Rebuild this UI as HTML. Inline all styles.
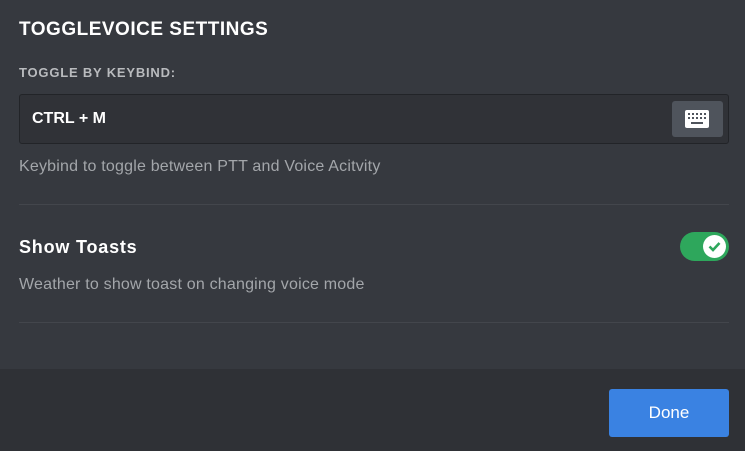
<!DOCTYPE html>
<html><head><style>
*{margin:0;padding:0;box-sizing:border-box}
body{width:745px;height:451px;background:#36393f;font-family:"Liberation Sans",sans-serif;position:relative;overflow:hidden}
.a{position:absolute;white-space:nowrap}
</style></head><body>
<div class="a" style="left:19px;top:19px;color:#fff;font-size:19px;font-weight:bold;letter-spacing:0.5px">TOGGLEVOICE SETTINGS</div>
<div class="a" style="left:19px;top:65px;color:#b9bbbe;font-size:13px;font-weight:bold;letter-spacing:0.8px">TOGGLE BY KEYBIND:</div>
<div class="a" style="left:19px;top:94px;width:710px;height:50px;background:#303237;border:1px solid #222428;border-radius:3px"></div>
<div class="a" style="left:32px;top:110px;color:#fff;font-size:16px;font-weight:bold">CTRL + M</div>
<div class="a" style="left:672px;top:101px;width:51px;height:36px;background:#4f545c;border-radius:3px"></div>
<svg class="a" style="left:685px;top:110px" width="24" height="18" viewBox="0 0 24 18"><rect x="0" y="0" width="24" height="18" rx="2" fill="#fff"/><g fill="#4f545c"><rect x="3" y="3" width="2" height="2"/><rect x="7" y="3" width="2" height="2"/><rect x="11" y="3" width="2" height="2"/><rect x="15" y="3" width="2" height="2"/><rect x="19" y="3" width="2" height="2"/><rect x="3" y="7" width="2" height="2"/><rect x="7" y="7" width="2" height="2"/><rect x="11" y="7" width="2" height="2"/><rect x="15" y="7" width="2" height="2"/><rect x="19" y="7" width="2" height="2"/><rect x="6" y="12" width="12" height="2"/></g></svg>
<div class="a" style="left:19px;top:158px;color:#a3a6aa;font-size:16px;letter-spacing:0.2px">Keybind to toggle between PTT and Voice Acitvity</div>
<div class="a" style="left:19px;top:204px;width:710px;height:1px;background:#43464c"></div>
<div class="a" style="left:19px;top:237px;color:#fff;font-size:18px;font-weight:bold;letter-spacing:0.8px">Show Toasts</div>
<div class="a" style="left:680px;top:232px;width:49px;height:29px;background:#2ea75c;border-radius:15px"></div>
<div class="a" style="left:703px;top:235px;width:23px;height:23px;background:#fff;border-radius:50%"></div>
<svg class="a" style="left:703px;top:235px" width="23" height="23" viewBox="0 0 23 23"><path d="M6.5 11.5l3.5 3.5 6.5-7" fill="none" stroke="#2ea75c" stroke-width="2.6"/></svg>
<div class="a" style="left:19px;top:276px;color:#a3a6aa;font-size:16px;letter-spacing:0.2px">Weather to show toast on changing voice mode</div>
<div class="a" style="left:19px;top:322px;width:710px;height:1px;background:#43464c"></div>
<div class="a" style="left:0;top:369px;width:745px;height:82px;background:#2f3136"></div>
<div class="a" style="left:609px;top:389px;width:120px;height:48px;background:#3a82e2;border-radius:3px;color:#fff;font-size:17px;text-align:center;line-height:47px">Done</div>
</body></html>
